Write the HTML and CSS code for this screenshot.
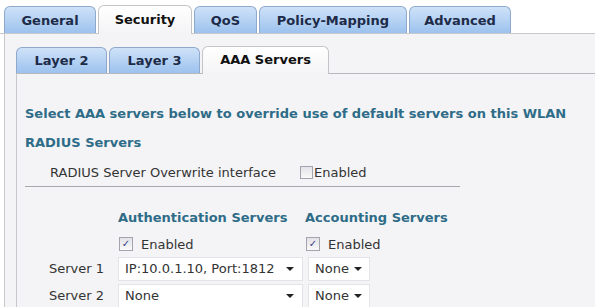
FILE: index.html
```html
<!DOCTYPE html>
<html>
<head>
    <title>WLAN Security</title>
    <link rel="stylesheet" href="styles.css">
</head>
<body>

<div class="tabs main-tabs">
    <span class="tab">General</span>
    <span class="tab active">Security</span>
    <span class="tab">QoS</span>
    <span class="tab">Policy-Mapping</span>
    <span class="tab">Advanced</span>
</div>

<div class="panel">
    <div class="tabs sub-tabs">
        <span class="tab">Layer 2</span>
        <span class="tab">Layer 3</span>
        <span class="tab active">AAA Servers</span>
    </div>

    <div class="content">
        <div class="tit">Select AAA servers below to override use of default servers on this WLAN</div>
        <div class="tit sub">RADIUS Servers</div>

        <div class="row overwrite">
            <span class="lbl">RADIUS Server Overwrite interface</span>
            <label class="ck"><span class="box"></span>Enabled</label>
        </div>

        <table class="servers" cellpadding="0" cellspacing="0">
            <tr>
                <td></td>
                <th>Authentication Servers</th>
                <th>Accounting Servers</th>
            </tr>
            <tr class="en">
                <td></td>
                <td><label class="ck"><span class="box checked">&#10003;</span>Enabled</label></td>
                <td><label class="ck"><span class="box checked">&#10003;</span>Enabled</label></td>
            </tr>
            <tr>
                <td class="srv">Server 1</td>
                <td><span class="sel wide">IP:10.0.1.10, Port:1812<i></i></span></td>
                <td><span class="sel">None<i></i></span></td>
            </tr>
            <tr>
                <td class="srv">Server 2</td>
                <td><span class="sel wide">None<i></i></span></td>
                <td><span class="sel">None<i></i></span></td>
            </tr>
        </table>
    </div>
</div>

</body>
</html>
```

FILE: styles.css
```css
body{ margin: 0;background: #FFF;font-family: "DejaVu Sans", Verdana, sans-serif;font-size: 13px;color: #333;overflow: hidden;}

.tabs{ display: flex;align-items: flex-end;gap: 2px;}
.tab{
    display: block;
    font-weight: bold;
    font-size: 13px;
    color: #1d2b48;
    text-align: center;
    border: solid 1px #8fa9cc;
    border-bottom: 0;
    border-radius: 6px 6px 0 0;
    background: linear-gradient(#cfe2f8, #9cc2ee);
    box-sizing: border-box;
}
.tab.active{ color: #111;background: linear-gradient(#FFF, #f4f4f6);border-color: #c4c4c8;}

.main-tabs{ padding: 5px 0 0 4px;border-bottom: solid 1px #c8c8cc;}
.main-tabs .tab{ height: 27px;line-height: 27px;}
.main-tabs .tab.active{ height: 29px;margin-bottom: -1px;}
.main-tabs .tab:nth-child(1){ width: 92px;}
.main-tabs .tab:nth-child(2){ width: 94px;}
.main-tabs .tab:nth-child(3){ width: 63px;}
.main-tabs .tab:nth-child(4){ width: 148px;}
.main-tabs .tab:nth-child(5){ width: 102px;}

.panel{
    display: flex;flex-direction: column;
    margin-left: 4px;padding: 12px 0 0 11px;
    background: #f4f4f6;border-left: solid 1px #c8c8cc;
    height: 273px;box-sizing: border-box;overflow: hidden;
}

.sub-tabs{ border-bottom: solid 1px #b8b8bc;}
.sub-tabs .tab{ height: 26px;line-height: 26px;}
.sub-tabs .tab.active{ height: 28px;margin-bottom: -1px;}
.sub-tabs .tab:nth-child(1){ width: 91px;}
.sub-tabs .tab:nth-child(2){ width: 91px;}
.sub-tabs .tab:nth-child(3){ width: 127px;}

.content{ flex: 1;border-left: solid 1px #c8c8cc;padding: 32px 0 0 8px;}

.tit{ font-weight: bold;color: #2e6c88;font-size: 13px;}
.tit.sub{ margin-top: 14px;}

.row{ display: flex;align-items: center;}
.overwrite{ margin-top: 15px;padding: 0 0 6px 25px;width: 410px;border-bottom: solid 1px #a8a8ac;}
.overwrite .lbl{ width: 250px;}

.ck{ display: inline-flex;align-items: center;}
.box{
    display: inline-block;
    width: 11px;height: 11px;
    border: solid 1px #a4a4b0;
    background: linear-gradient(#e2e2e8, #fafafa);
    margin-right: 1px;
    font-size: 10px;line-height: 11px;text-align: center;color: #3a3f8a;
}
.box.checked{ margin-right: 8px;width: 12px;height: 12px;line-height: 12px;}

.servers{ margin-top: 20px;border-collapse: collapse;}
.servers th{ text-align: left;color: #2e6c88;font-size: 13px;padding: 0 0 6px 0;}
.servers th:nth-child(2){ width: 187px;}
.servers td{ padding: 0;height: 27px;}
.servers td:first-child{ width: 92px;}
.servers td.srv{ padding-left: 24px;box-sizing: border-box;}
.servers td:last-child .sel{ margin-left: 3px;width: 62px;padding: 0 7px 0 6px;}
.servers tr.en td{ height: 20px;vertical-align: top;padding: 1px 0 0 1px;}
.servers tr.en td:last-child{ padding-left: 1px;}

.sel{
    display: inline-flex;align-items: center;justify-content: space-between;
    height: 24px;width: 61px;
    padding: 0 8px 0 6px;box-sizing: border-box;
    background: #FFF;border: solid 1px #e4e4e8;
}
.sel.wide{ width: 185px;}
.sel i{ width: 0;height: 0;border-left: 4px solid transparent;border-right: 4px solid transparent;border-top: 4px solid #222;}
```
